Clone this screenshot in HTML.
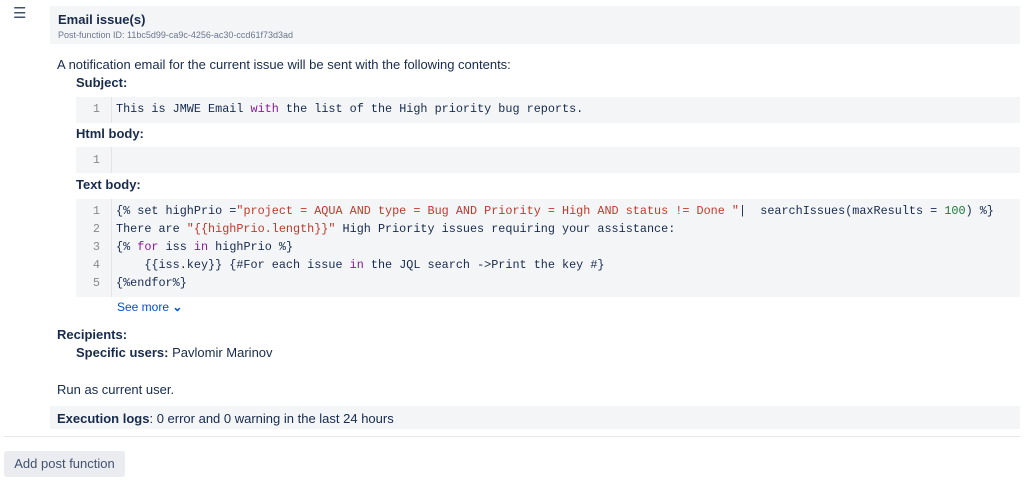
<!DOCTYPE html>
<html><head><meta charset="utf-8"><style>
body{margin:0;width:1024px;height:485px;background:#fff;font-family:"Liberation Sans",sans-serif;color:#172b4d;font-size:13px;position:relative;overflow:hidden}
.a{position:absolute}
.b{font-weight:bold}
.code{position:absolute;left:76px;width:944px;background:#f4f5f7;font-family:"Liberation Mono",monospace;font-size:11.8px;color:#172b4d;overflow:hidden}
.gut{position:absolute;left:0;top:0;bottom:0;width:35px;border-right:1px solid #e4e4e4}
.l{position:absolute;left:40px;white-space:pre}
.n{position:absolute;left:0;width:24px;text-align:right;color:#8a8a8a}
.s{color:#c0392b}
.k{color:#8a1a9a}
.g{color:#1b7a3a}
</style></head><body>
<div class="a" style="left:13px;top:4px;font-size:15px;color:#42526e">☰</div>
<div class="a" style="left:50px;top:6px;width:970px;height:38px;background:#f4f5f7"></div>
<div class="a b" style="left:58px;top:12px;font-size:13px">Email issue(s)</div>
<div class="a" style="left:58px;top:30px;font-size:9px;color:#6b778c">Post-function ID: 11bc5d99-ca9c-4256-ac30-ccd61f73d3ad</div>
<div class="a" style="left:57px;top:57px;font-size:13px">A notification email for the current issue will be sent with the following contents:</div>
<div class="a b" style="left:76px;top:75px">Subject:</div>
<div class="code" style="top:97px;height:26px"><div class="gut"></div><div class="n" style="top:5px">1</div><div class="l" style="top:5px">This is JMWE Email <span class="k">with</span> the list of the High priority bug reports.</div></div>
<div class="a b" style="left:76px;top:126px">Html body:</div>
<div class="code" style="top:147px;height:26px"><div class="gut"></div><div class="n" style="top:6px">1</div></div>
<div class="a b" style="left:76px;top:177px">Text body:</div>
<div class="code" style="top:199px;height:98px"><div class="gut"></div>
<div class="n" style="top:5px">1</div><div class="l" style="top:5px">{% set highPrio =<span class="s">"project = AQUA AND type = Bug AND Priority = High AND status != Done "</span>|  searchIssues(maxResults = <span class="g">100</span>) %}</div>
<div class="n" style="top:23px">2</div><div class="l" style="top:23px">There are <span class="s">"{{highPrio.length}}"</span> High Priority issues requiring your assistance:</div>
<div class="n" style="top:41px">3</div><div class="l" style="top:41px">{% <span class="k">for</span> iss <span class="k">in</span> highPrio %}</div>
<div class="n" style="top:59px">4</div><div class="l" style="top:59px">    {{iss.key}} {#For each issue <span class="k">in</span> the JQL search -&gt;Print the key #}</div>
<div class="n" style="top:77px">5</div><div class="l" style="top:77px">{%endfor%}</div>
</div>
<div class="a" style="left:117px;top:300px;font-size:12px;color:#0052cc">See more <b>⌄</b></div>
<div class="a b" style="left:57px;top:327px">Recipients:</div>
<div class="a" style="left:76px;top:345px"><b>Specific users:</b> Pavlomir Marinov</div>
<div class="a" style="left:57px;top:382px">Run as current user.</div>
<div class="a" style="left:50px;top:406px;width:970px;height:23px;background:#f4f5f7"></div>
<div class="a" style="left:57px;top:411px"><b>Execution logs</b>: 0 error and 0 warning in the last 24 hours</div>
<div class="a" style="left:4px;top:436px;width:1016px;height:1px;background:#e4e6ea"></div>
<div class="a" style="left:4px;top:451px;width:121px;height:26px;background:#ebecf0;border-radius:3px;color:#42526e;font-size:13px;line-height:26px;text-align:center">Add post function</div>
</body></html>
